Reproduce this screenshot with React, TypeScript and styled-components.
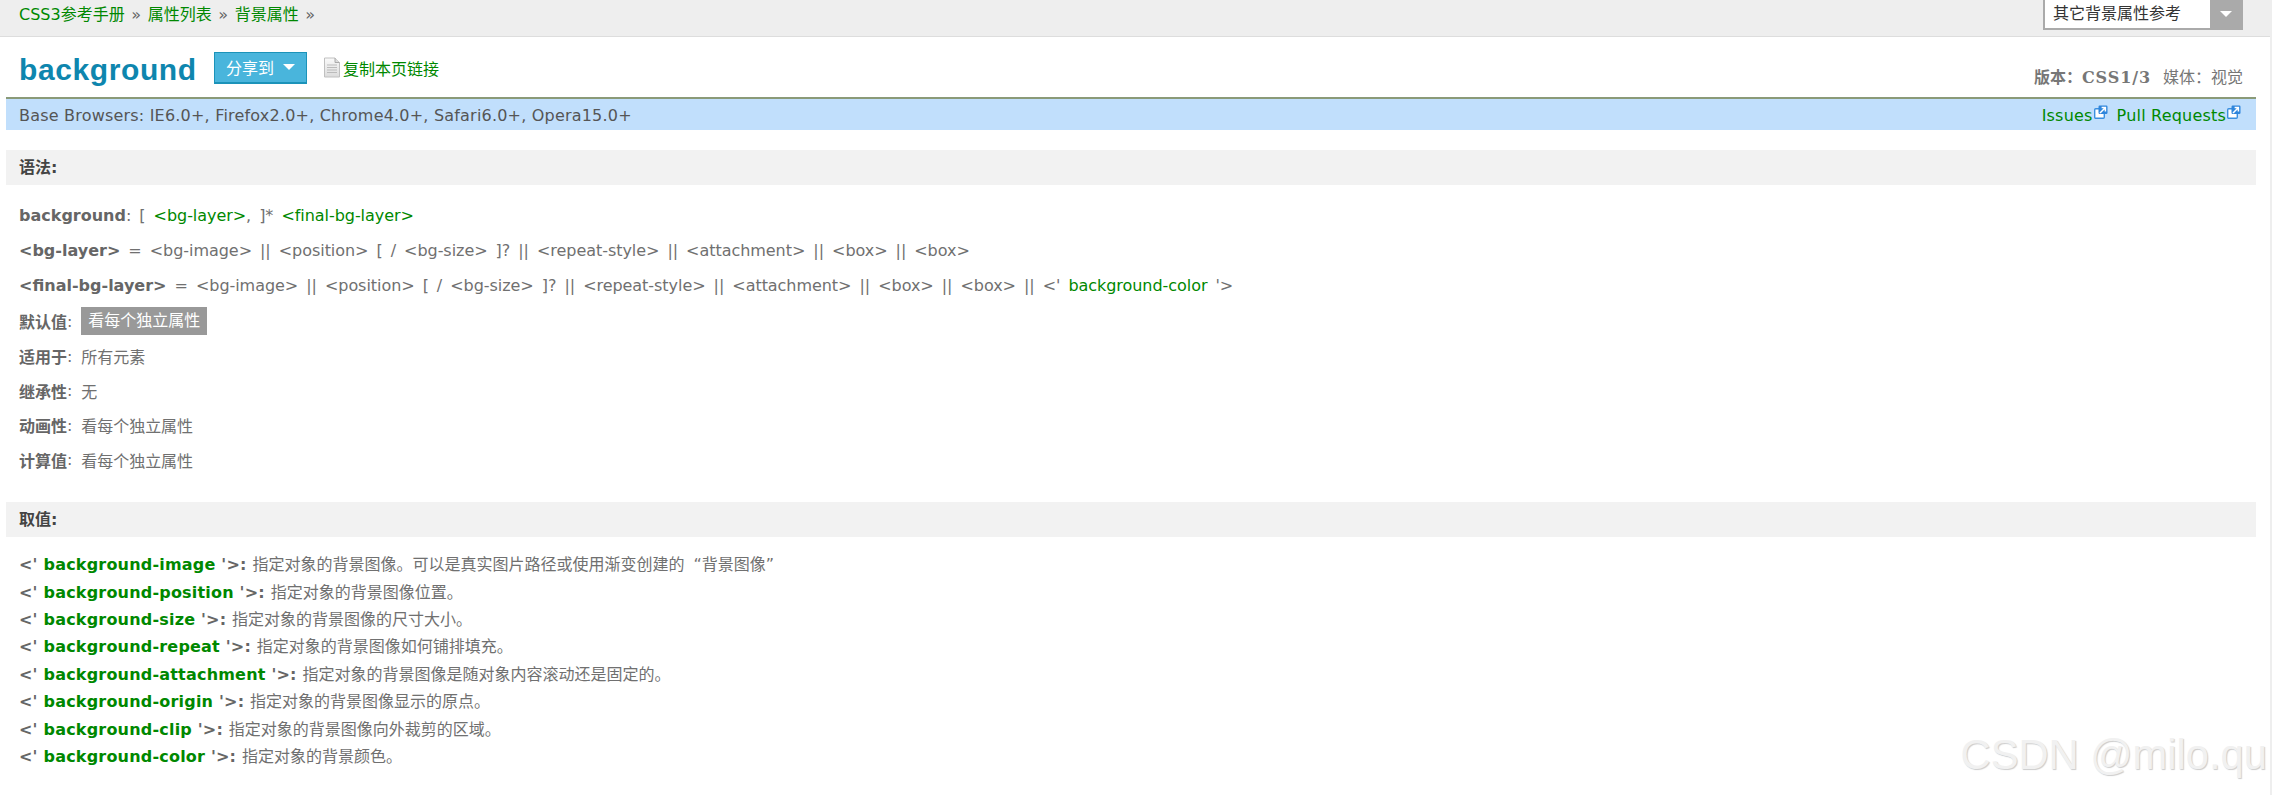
import React from "react";
import styled, { createGlobalStyle } from "styled-components";

const Global = createGlobalStyle`
  html, body { margin: 0; padding: 0; background: #fff; }
  body {
    font-family: "DejaVu Sans", "Noto Sans CJK SC", sans-serif;
    font-size: 16px;
    color: #666;
  }
`;

const Page = styled.div`
  position: relative;
  width: 2270px;
  height: 795px;
  border-right: 2px solid #eee;
  overflow: hidden;
`;
const TopBar = styled.div`
  display: flex;
  justify-content: space-between;
  align-items: flex-start;
  height: 36px;
  padding: 0 27px 0 19px;
  background: #eee;
  border-bottom: 1px solid #ddd;
`;
const Crumbs = styled.div`
  line-height: 30px;
  color: #666;
  word-spacing: 1.5px;
`;
const Link = styled.a`
  color: #080;
  text-decoration: none;
`;
const Select = styled.div`
  display: flex;
  justify-content: space-between;
  width: 200px;
  height: 30px;
  box-sizing: border-box;
  background: #fff;
  border: 1px solid #aaa;
  border-top: 0;
  border-bottom-width: 2px;
  border-left-width: 2px;
`;
const SelectLabel = styled.span`
  padding-left: 8px;
  line-height: 28px;
  color: #333;
`;
const SelectArrow = styled.span`
  display: flex;
  align-items: center;
  justify-content: center;
  width: 32px;
  background: #aaa;
`;
const Caret = styled.i`
  width: 0;
  height: 0;
  border-left: 6px solid transparent;
  border-right: 6px solid transparent;
  border-top: 6px solid #fff;
`;
const TitleRow = styled.div`
  display: flex;
  align-items: center;
  height: 60px;
  padding: 1px 27px 0 19px;
  box-sizing: border-box;
`;
const Title = styled.h1`
  margin: 5px 18px 0 0;
  width: 177px;
  font-family: "Liberation Sans", sans-serif;
  font-size: 30px;
  font-weight: 700;
  color: #0e86ae;
  line-height: 32px;
  letter-spacing: 0.6px;
  white-space: nowrap;
`;
const ShareButton = styled.div`
  display: flex;
  align-items: center;
  gap: 9px;
  box-sizing: border-box;
  width: 93px;
  height: 32px;
  padding-left: 11px;
  background: #49b5dc;
  border: 1px solid #1b93b9;
  border-bottom-width: 2px;
  color: #fff;
`;
const CopyLink = styled(Link)`
  display: flex;
  align-items: center;
  gap: 3px;
  margin-left: 17px;
`;
const Meta = styled.div`
  display: flex;
  gap: 12px;
  margin-left: auto;
  padding-top: 16px;
  color: #777;
`;
const MetaStrong = styled.b`
  font-weight: 700;
`;
const MetaVersion = styled.span`
  font-family: "DejaVu Serif", serif;
  letter-spacing: 0.9px;
`;
const Content = styled.div`
  padding: 0 14px 0 6px;
`;
const InfoBar = styled.div`
  display: flex;
  justify-content: space-between;
  align-items: center;
  height: 33px;
  padding: 2px 15px 0 13px;
  background: #c1dffc;
  border-top: 2px solid #8a9a78;
  box-sizing: border-box;
  color: #555;
  letter-spacing: 0.2px;
`;
const InfoLinks = styled.div`
  display: flex;
  gap: 9px;
  line-height: 19px;
`;
const InfoLink = styled(Link)`
  display: inline-flex;
  align-items: flex-start;
`;
const ExternalSvg = styled.svg`
  width: 14px;
  height: 14px;
  margin: -1px 0 0 1px;
`;
const SectionHead = styled.h2<{ $top: number }>`
  margin: ${(p) => p.$top}px 0 0;
  height: 35px;
  padding-left: 13px;
  background: #f2f2f2;
  color: #444;
  font-size: 16px;
  font-weight: 700;
  line-height: 36px;
`;
const SyntaxList = styled.div`
  padding: 13px 0 0 13px;
`;
const SyntaxRow = styled.div<{ $compact?: boolean }>`
  display: flex;
  align-items: center;
  height: ${(p) => (p.$compact ? "34.6px" : "35.2px")};
  white-space: pre;
  color: #707070;
  letter-spacing: -0.05px;
  word-spacing: 3px;
`;
const Green = styled.span`
  color: #080;
`;
const Key = styled.b`
  font-weight: 700;
  color: #666;
  white-space: pre;
  letter-spacing: 0;
`;
const Colon = styled.span`
  margin-right: 9px;
`;
const Tag = styled.span`
  padding: 0 7px;
  height: 28px;
  line-height: 28px;
  background: #999;
  color: #fff;
  letter-spacing: 0;
`;
const ValueList = styled.div`
  padding: 14px 0 0 13px;
`;
const ValueRow = styled.div`
  height: 27.43px;
  line-height: 27.43px;
  white-space: pre;
  color: #707070;
  word-spacing: 4px;
`;
const ValueName = styled.b`
  color: #666;
  letter-spacing: 0.2px;
  word-spacing: 0;
`;
const Watermark = styled.div`
  position: absolute;
  right: 3px;
  top: 731px;
  font-family: "Liberation Sans", sans-serif;
  font-size: 41.7px;
  color: #f1f1f1;
  text-shadow: 1px 1px 1px #ccc;
  white-space: nowrap;
`;

const ExternalIcon = () => (
  <ExternalSvg viewBox="0 0 14 14">
    <rect x="0.7" y="3.7" width="9.6" height="9.6" rx="1" fill="#fff" stroke="#3a8fe0" strokeWidth="1.4" />
    <rect x="4.5" y="0.5" width="9" height="8.5" rx="1.2" fill="#2f86dc" />
    <path d="M6 8 L11 3 M7.6 2.6 H11.4 V6.4" stroke="#fff" strokeWidth="1.5" fill="none" />
  </ExternalSvg>
);

const DocIcon = () => (
  <svg width="16" height="21" viewBox="0 0 16 21">
    <defs>
      <linearGradient id="docFill" x1="0" y1="0" x2="0" y2="1">
        <stop offset="0" stopColor="#fafafa" />
        <stop offset="1" stopColor="#dcdcdc" />
      </linearGradient>
    </defs>
    <path d="M0.5 1 H11 L15.5 5.5 V20 H0.5 Z" fill="url(#docFill)" stroke="#c0c0c0" />
    <path d="M11 1 V5.5 H15.5" fill="#ddd" stroke="#aaa" />
    <path d="M3 8 H13 M3 10.5 H13 M3 13 H13 M3 15.5 H13" stroke="#bbb" />
  </svg>
);

const values: [string, string][] = [
  ["background-image", "指定对象的背景图像。可以是真实图片路径或使用渐变创建的 “背景图像”"],
  ["background-position", "指定对象的背景图像位置。"],
  ["background-size", "指定对象的背景图像的尺寸大小。"],
  ["background-repeat", "指定对象的背景图像如何铺排填充。"],
  ["background-attachment", "指定对象的背景图像是随对象内容滚动还是固定的。"],
  ["background-origin", "指定对象的背景图像显示的原点。"],
  ["background-clip", "指定对象的背景图像向外裁剪的区域。"],
  ["background-color", "指定对象的背景颜色。"],
];

const plainProps: [string, string][] = [
  ["适用于", "所有元素"],
  ["继承性", "无"],
  ["动画性", "看每个独立属性"],
  ["计算值", "看每个独立属性"],
];

export default function App() {
  return (
    <Page>
      <Global />
      <TopBar>
        <Crumbs>
          <Link>CSS3参考手册</Link> » <Link>属性列表</Link> » <Link>背景属性</Link> »
        </Crumbs>
        <Select>
          <SelectLabel>其它背景属性参考</SelectLabel>
          <SelectArrow>
            <Caret />
          </SelectArrow>
        </Select>
      </TopBar>
      <TitleRow>
        <Title>background</Title>
        <ShareButton>
          分享到
          <Caret />
        </ShareButton>
        <CopyLink>
          <DocIcon />
          复制本页链接
        </CopyLink>
        <Meta>
          <MetaStrong>
            版本：<MetaVersion>CSS1/3</MetaVersion>
          </MetaStrong>
          <span>媒体：视觉</span>
        </Meta>
      </TitleRow>
      <Content>
        <InfoBar>
          <span>Base Browsers: IE6.0+, Firefox2.0+, Chrome4.0+, Safari6.0+, Opera15.0+</span>
          <InfoLinks>
            <InfoLink>
              Issues
              <ExternalIcon />
            </InfoLink>
            <InfoLink>
              Pull Requests
              <ExternalIcon />
            </InfoLink>
          </InfoLinks>
        </InfoBar>
        <SectionHead $top={20}>语法:</SectionHead>
        <SyntaxList>
          <SyntaxRow>
            <Key>background</Key>: [ <Green>{"<bg-layer>"}</Green>, ]* <Green>{"<final-bg-layer>"}</Green>
          </SyntaxRow>
          <SyntaxRow>
            <Key>{"<bg-layer>"}</Key>
            {" = <bg-image> || <position> [ / <bg-size> ]? || <repeat-style> || <attachment> || <box> || <box>"}
          </SyntaxRow>
          <SyntaxRow>
            <Key>{"<final-bg-layer>"}</Key>
            {" = <bg-image> || <position> [ / <bg-size> ]? || <repeat-style> || <attachment> || <box> || <box> || <' "}
            <Green>background-color</Green>
            {" '>"}
          </SyntaxRow>
          <SyntaxRow>
            <Key>默认值</Key>
            <Colon>:</Colon>
            <Tag>看每个独立属性</Tag>
          </SyntaxRow>
          {plainProps.map(([k, v]) => (
            <SyntaxRow key={k} $compact>
              <Key>{k}</Key>
              <Colon>:</Colon>
              <span>{v}</span>
            </SyntaxRow>
          ))}
        </SyntaxList>
        <SectionHead $top={25}>取值:</SectionHead>
        <ValueList>
          {values.map(([name, desc]) => (
            <ValueRow key={name}>
              <ValueName>
                {"<' "}
                <Green>{name}</Green>
                {" '>: "}
              </ValueName>
              {desc}
            </ValueRow>
          ))}
        </ValueList>
      </Content>
      <Watermark>CSDN @milo.qu</Watermark>
    </Page>
  );
}
